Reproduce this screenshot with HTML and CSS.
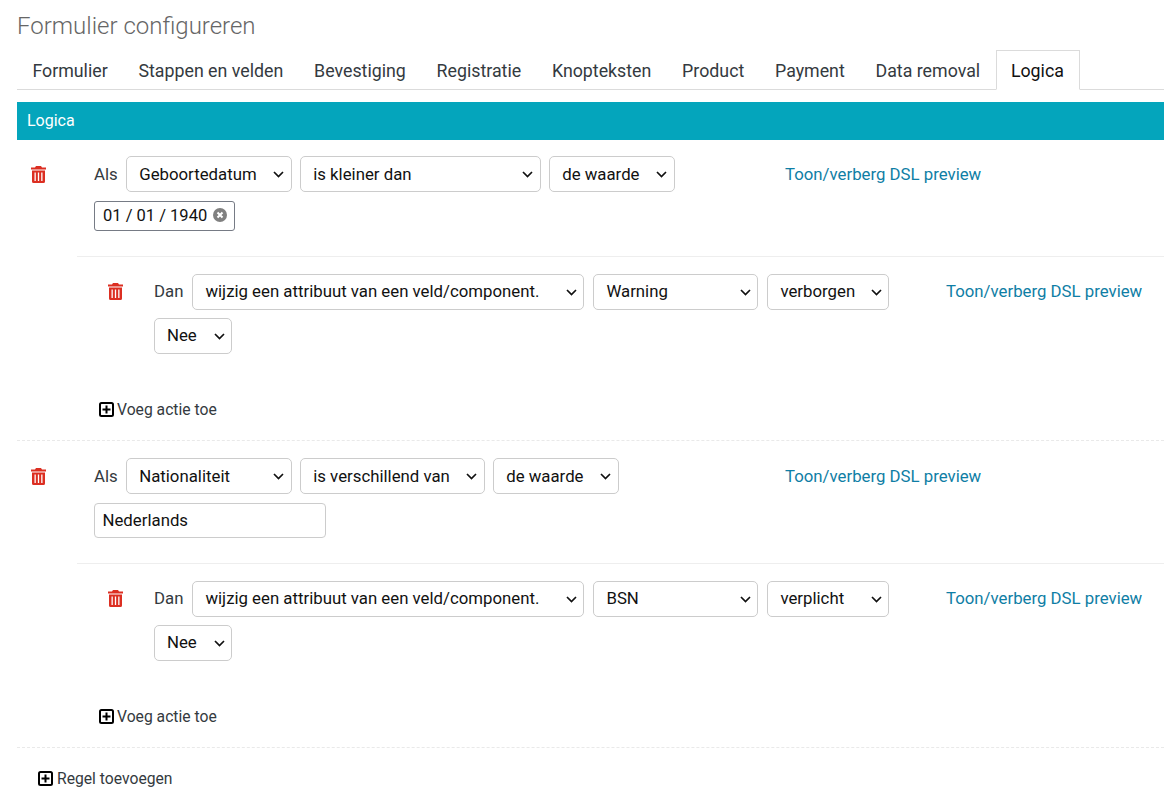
FILE: index.html
```html
<!DOCTYPE html>
<html>
<head>
    <meta charset="utf-8" />
    <title>Formulier configureren</title>
    <link rel="stylesheet" href="styles.css">
</head>
<body>
    <svg class="defs" width="0" height="0">
        <symbol id="trash" viewBox="0 0 15 17">
            <path d="M5 0h5l1 1.500h4v2H0v-2h4zM1 4.500h13V15.500a1.500 1.500 0 0 1-1.500 1.500h-10A1.500 1.500 0 0 1 1 15.500zM3.500 6.500v8.500h1.300V6.500zM6.850 6.500v8.500h1.300V6.500zM10.200 6.500v8.500h1.300V6.500z" fill-rule="evenodd" />
        </symbol>
        <symbol id="plus" viewBox="0 0 15 15">
            <rect x="1" y="1" width="13" height="13" rx="1.500" fill="none" stroke="#000" stroke-width="2" />
            <path d="M7.500 3.500v8M3.500 7.500h8" stroke="#000" stroke-width="2" />
        </symbol>
    </svg>

    <h1 class="title">Formulier configureren</h1>

    <ul class="tabs">
        <li><a href="#">Formulier</a></li>
        <li><a href="#">Stappen en velden</a></li>
        <li><a href="#">Bevestiging</a></li>
        <li><a href="#">Registratie</a></li>
        <li><a href="#">Knopteksten</a></li>
        <li><a href="#">Product</a></li>
        <li><a href="#">Payment</a></li>
        <li><a href="#">Data removal</a></li>
        <li><a href="#" class="active">Logica</a></li>
    </ul>

    <div class="banner">Logica</div>

    <div class="rule">
        <div class="line">
            <a href="#" class="trash"><svg><use href="#trash" /></svg></a>
            <div class="fields">
                <span class="lbl">Als</span>
                <select class="w166"><option>Geboortedatum</option></select>
                <select class="w241"><option>is kleiner dan</option></select>
                <select class="w126"><option>de waarde</option></select>
                <div class="date">01 / 01 / 1940
                    <svg class="clear" viewBox="0 0 14 14"><circle cx="7" cy="7" r="7" fill="#808080" /><path d="M4.500 4.500l5 5M9.500 4.500l-5 5" stroke="#fff" stroke-width="2" /></svg>
                </div>
            </div>
            <a href="#" class="dsl">Toon/verberg DSL preview</a>
        </div>
        <div class="action">
            <div class="line">
                <a href="#" class="trash"><svg><use href="#trash" /></svg></a>
                <div class="fields">
                    <span class="lbl">Dan</span>
                    <select class="w392"><option>wijzig een attribuut van een veld/component.</option></select>
                    <select class="w165"><option>Warning</option></select>
                    <select class="w122"><option>verborgen</option></select>
                    <select class="w78"><option>Nee</option></select>
                </div>
                <a href="#" class="dsl">Toon/verberg DSL preview</a>
            </div>
            <a href="#" class="add add-action"><svg><use href="#plus" /></svg>Voeg actie toe</a>
        </div>
    </div>

    <div class="rule">
        <div class="line">
            <a href="#" class="trash"><svg><use href="#trash" /></svg></a>
            <div class="fields">
                <span class="lbl">Als</span>
                <select class="w166"><option>Nationaliteit</option></select>
                <select class="w185"><option>is verschillend van</option></select>
                <select class="w126"><option>de waarde</option></select>
                <input class="txt" type="text" value="Nederlands" />
            </div>
            <a href="#" class="dsl">Toon/verberg DSL preview</a>
        </div>
        <div class="action">
            <div class="line">
                <a href="#" class="trash"><svg><use href="#trash" /></svg></a>
                <div class="fields">
                    <span class="lbl">Dan</span>
                    <select class="w392"><option>wijzig een attribuut van een veld/component.</option></select>
                    <select class="w165"><option>BSN</option></select>
                    <select class="w122"><option>verplicht</option></select>
                    <select class="w78"><option>Nee</option></select>
                </div>
                <a href="#" class="dsl">Toon/verberg DSL preview</a>
            </div>
            <a href="#" class="add add-action"><svg><use href="#plus" /></svg>Voeg actie toe</a>
        </div>
    </div>

    <a href="#" class="add add-rule"><svg><use href="#plus" /></svg>Regel toevoegen</a>
</body>
</html>
```
FILE: styles.css
```css
body {
    margin: 0;
    padding-left: 17px;
    font-family: Roboto, "Liberation Sans", sans-serif;
    font-size: 16.8px;
    color: #212529;
    background-color: #fff;
}

a {
    text-decoration: none;
}

.defs {
    position: absolute;
}

.title {
    margin: 0;
    padding-top: 12px;
    height: 39px;
    box-sizing: border-box;
    font-size: 24px;
    line-height: 28px;
    font-weight: 300;
    color: #666;
}

.tabs {
    display: flex;
    height: 40px;
    box-sizing: border-box;
    margin: 11px 0 12px;
    padding: 0;
    list-style: none;
    border-bottom: 1px solid #dbdbdb;
}

.tabs a {
    display: block;
    height: 40px;
    box-sizing: border-box;
    padding: 9px 14.38px 0;
    border: 1px solid transparent;
    font-size: 17.8px;
    line-height: 21px;
    color: #343a40;
}

.tabs a.active {
    padding: 9px 15px 0 14.38px;
    border-color: #dbdbdb;
    border-bottom-color: #fff;
    color: #111;
}

.banner {
    height: 38px;
    box-sizing: border-box;
    padding: 9px 10px;
    background-color: #04a5bc;
    color: #fff;
    font-size: 16px;
    line-height: 19px;
}

.rule {
    padding-top: 16px;
    border-bottom: 1px dashed #e9e9e9;
}

.rule + .rule {
    padding-top: 17px;
}

.line {
    display: flex;
    align-items: flex-start;
}

.trash {
    flex: none;
    width: 77px;
    padding: 10px 0 0 14px;
    box-sizing: border-box;
    color: #dc2f22;
}

.trash svg {
    display: block;
    width: 15px;
    height: 17px;
    fill: currentColor;
}

.fields {
    flex: none;
    width: 691px;
    display: flex;
    flex-wrap: wrap;
    align-items: center;
    gap: 9px 8px;
}

.lbl {
    color: #343a40;
}

select {
    appearance: none;
    height: 36px;
    padding: 0 24px 0 12.5px;
    box-sizing: border-box;
    border: 1px solid #ccc;
    border-radius: 5px;
    background: #fff url("data:image/svg+xml,%3Csvg xmlns='http://www.w3.org/2000/svg' width='11' height='7'%3E%3Cpath d='M1 1l4.500 4.500L10 1' fill='none' stroke='%23111' stroke-width='1.700'/%3E%3C/svg%3E") no-repeat right 6.5px center;
    font-family: inherit;
    font-size: 16.8px;
    color: #111;
}

.w78 { width: 78px; }
.w122 { width: 122px; }
.w126 { width: 126px; }
.w165 { width: 165px; }
.w166 { width: 166px; }
.w185 { width: 185px; }
.w241 { width: 241px; }
.w392 { width: 392px; }

.date {
    display: flex;
    align-items: center;
    justify-content: space-between;
    width: 141px;
    height: 30px;
    padding: 0 7px 2px 8px;
    box-sizing: border-box;
    border: 1px solid #767b85;
    border-radius: 3px;
    font-size: 16.5px;
    color: #111;
}

.clear {
    width: 14px;
    height: 14px;
}

.txt {
    width: 232px;
    height: 35px;
    padding: 0 7.5px 2px;
    box-sizing: border-box;
    border: 1px solid #ccc;
    border-radius: 4px;
    font-family: inherit;
    font-size: 16.8px;
    color: #111;
}

.dsl {
    flex: none;
    padding-top: 8px;
    color: #0f7ea5;
    line-height: 20px;
}

.action {
    margin: 25px 0 0 60px;
    padding-top: 17px;
    border-top: 1px solid #eee;
}

.action .trash {
    padding: 9px 0 0 31px;
}

.action .fields {
    width: 792px;
    gap: 8px 9px;
}

.action select {
    padding: 0 24px 2px 12px;
}

.action .lbl {
    margin-bottom: 2px;
}

.action .dsl {
    padding-top: 7px;
}

.add {
    display: flex;
    align-items: center;
    gap: 3px;
    font-size: 15.7px;
    line-height: 18px;
    color: #343a40;
}

.add svg {
    width: 15px;
    height: 15px;
    margin-bottom: 2px;
}

.add-action {
    margin: 47px 0 21px 22px;
}

.add-rule {
    gap: 4px;
    margin: 22px 0 11px 21px;
}
```
